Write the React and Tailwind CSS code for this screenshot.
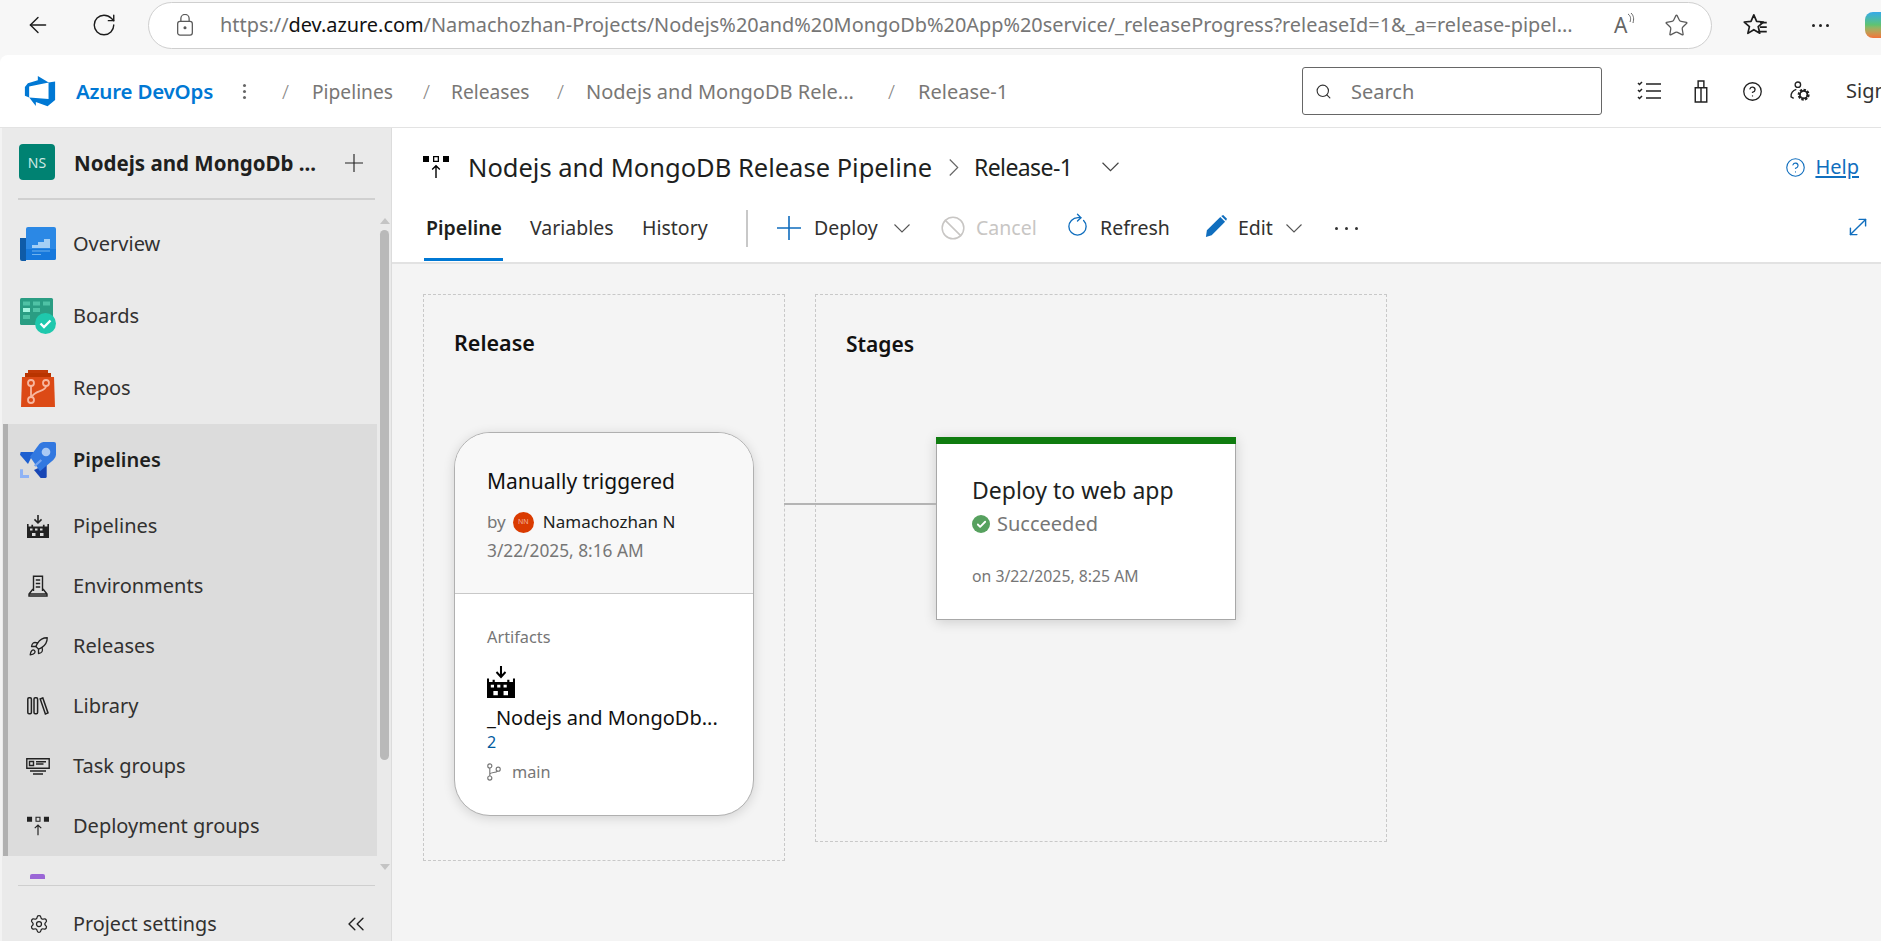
import React from 'react';
import { ArrowLeft, RotateCw, Star, Search, Ban, CircleHelp, MoveDiagonal, Settings, ChevronsLeft, Check, Rocket } from 'lucide-react';

const Factory = ({ className }) => (
  <svg viewBox="0 0 22 23" preserveAspectRatio="none" className={className} fill="currentColor">
    <path d="M10.2 0h1.6v6l2.2-2.2 1.1 1.1L11 9 6.9 4.9 8 3.8l2.2 2.2z" />
    <path fillRule="evenodd" d="M0 9h1.6v2.5h2.8V9.8h1.7v1.7h9.8V9.8h1.7v1.7h2.8V9H22v14H0zM3 13.5v2h2.5v-2zm5 0v2h2.5v-2zm5 0v2h2.5v-2zM5 18v3h3.5v-3zm8 0v3h3.500v-3z" />
  </svg>
);

const DeployGroups = ({ className }) => (
  <svg viewBox="0 0 26 22" className={className} fill="currentColor">
    <path d="M0 0h6v6H0zM20 0h6v6h-6z" />
    <path fillRule="evenodd" d="M10 0h6v6h-6zm1.3 1.3v3.4h3.4V1.3z" />
    <path d="M12.3 22V11.5L9.6 14l-.9-.9L13 8.8l4.3 4.3-.9.9-2.7-2.500V22z" />
  </svg>
);

const Environments = ({ className }) => (
  <svg viewBox="0 0 20 22" className={className} fill="none" stroke="currentColor" strokeWidth="1.4">
    <path d="M5.500 16V1.200h9V16M7.800 5h4.400M7.800 8.500h4.400M7.800 12h4.400" />
    <path d="M5 14 1 19v2h18v-2l-4-5M1 19h18" />
  </svg>
);

const Library = ({ className }) => (
  <svg viewBox="0 0 22 18" className={className} fill="none" stroke="currentColor" strokeWidth="1.5">
    <rect x="0.8" y="0.8" width="3.6" height="16" rx="1.2" />
    <rect x="7" y="0.8" width="3.6" height="16" rx="1.2" />
    <path d="M13.200 2 15.800.9l5.200 15-2.600 1z" />
  </svg>
);

const TaskGroups = ({ className }) => (
  <svg viewBox="0 0 24 17" className={className} fill="none" stroke="currentColor" strokeWidth="1.4">
    <path d="M.8.8h22.400v9.400H.8zM4 13h16M7 16h10" />
    <path d="M3.500 3.500h4v4h-4zM10 3.700h10M10 6h7.500" />
  </svg>
);

const PersonGear = ({ className }) => (
  <svg viewBox="0 0 20 20" className={className}>
    <circle cx="7.5" cy="3.5" r="2.6" fill="none" stroke="currentColor" strokeWidth="1.3" />
    <path d="M6 8C2.500 9 .8 11 1 15l2.500 1.500" fill="none" stroke="currentColor" strokeWidth="1.3" />
    <circle cx="13" cy="13" r="4.2" fill="none" stroke="currentColor" strokeWidth="3" strokeDasharray="2 1.2" />
    <circle cx="13" cy="13" r="3.6" fill="none" stroke="currentColor" strokeWidth="1.6" />
  </svg>
);

const Favorites = ({ className }) => (
  <svg viewBox="0 0 24 24" className={className} fill="none" stroke="currentColor" strokeWidth="1.5">
    <path d="M10.500 2.500 13 8.400l6 .5-4.600 4 1.400 6-5.300-3.200L5.200 19l1.400-6L2 8.900l6-.5z" strokeLinejoin="round" />
    <path d="M16 9.500h6M16 13.500h6M15 17.500h7" />
  </svg>
);

const BranchIcon = ({ className }) => (
  <svg viewBox="0 0 15 19" className={className} fill="none" stroke="currentColor" strokeWidth="1.2">
    <circle cx="3" cy="3" r="2.2" />
    <circle cx="3" cy="16" r="2.2" />
    <circle cx="12" cy="6.5" r="2.2" />
    <path d="M3 5.200v8.600M3 12c0-2.500 6.500-1.500 8.300-3.500" />
  </svg>
);

// thin chevron and plus, lucide's have too much padding for these spots
const Chevron = ({ className }) => (
  <svg viewBox="0 0 16 9" className={className} fill="none" stroke="currentColor" strokeWidth="1.1">
    <path d="M.5.5 8 8l7.500-7.500" />
  </svg>
);

const ChevronRight = () => (
  <svg viewBox="0 0 9 16" className="w-[10px] h-[17px] ml-[17px] text-[#666] shrink-0" fill="none" stroke="currentColor" strokeWidth="1.1">
    <path d="M.5.5 8 8 .5 15.500" />
  </svg>
);

const ThinPlus = ({ className, width = 1.6 }) => (
  <svg viewBox="0 0 24 24" className={className} fill="none" stroke="currentColor" strokeWidth={width}>
    <path d="M0 12h24M12 0v24" />
  </svg>
);

const OverviewIcon = () => (
  <svg viewBox="0 0 36 34" className="w-9 h-[34px]">
    <path d="M0 11h6v23H2a2 2 0 0 1-2-2z" fill="#0f5ba8" />
    <rect x="6" y="0" width="30" height="33" rx="2" fill="#2b88e5" />
    <path d="M6 22h30v9a2 2 0 0 1-2 2H6z" fill="#1678dc" />
    <path d="M12 18h6v-3h6v-3h6V7h0v14H12z" fill="#a4cff5" />
    <path d="M12 24h18M12 27.500h9" stroke="#6fb2ee" strokeWidth="1" />
  </svg>
);

const BoardsIcon = () => (
  <svg viewBox="0 0 36 36" className="w-9 h-9">
    <rect x="0" y="0" width="33" height="27" rx="1.5" fill="#2a9d83" />
    <path d="M3 3.500h7v4H3zM13 3.500h7v4h-7zM23 3.500h7v4h-7zM13 10h7v4h-7zM3 17h7v4H3z" fill="#4fc2a5" />
    <path d="M3 10h7v4H3z" fill="#a5f5e0" />
    <circle cx="25.500" cy="25.500" r="10.500" fill="#1fc8ad" />
    <path d="m20.500 25.500 3.500 3.500 6.500-6.500" fill="none" stroke="#fff" strokeWidth="2.400" />
  </svg>
);

const ReposIcon = () => (
  <svg viewBox="0 0 34 37" className="w-[34px] h-[37px]">
    <path d="M4 3h26v6H4z" fill="#b93400" />
    <path d="M7 0h20v3H7z" fill="#c23a08" />
    <path d="M1 7h32l1 30H0z" fill="#dc4a16" />
    <g fill="none" stroke="#f7b7a0" strokeWidth="1.800">
      <circle cx="10" cy="13" r="3" />
      <circle cx="25" cy="13" r="3" />
      <circle cx="10" cy="30" r="3" />
      <path d="M10 16v11M25 16c0 6-12 4-14 11" />
    </g>
  </svg>
);

const PipelinesIcon = () => (
  <svg viewBox="0 0 108 108" className="w-9 h-9">
    <path d="M2 30h40L24 66 0 38z" fill="#1d5fd0" />
    <path d="M80 66v38q0 4-4 4H62L42 84z" fill="#1746b5" />
    <path d="M30 44 58 6q4-4 12-6h32q6 0 6 6v32q0 8-8 16L60 88z" fill="#3278e0" />
    <path d="M44 72 64 54" stroke="#76a5ef" strokeWidth="7" />
    <circle cx="78" cy="30" r="13" fill="#a9c9f5" />
    <path d="M0 82h9v17h18v9H0z" fill="#8fb3f5" />
  </svg>
);

const navTop = [
  { label: 'Overview', icon: <OverviewIcon /> },
  { label: 'Boards', icon: <BoardsIcon /> },
  { label: 'Repos', icon: <ReposIcon /> },
];

const navSub = [
  { label: 'Pipelines', icon: <Factory className="w-[22px] h-[23px]" /> },
  { label: 'Environments', icon: <Environments className="w-5 h-[22px]" /> },
  { label: 'Releases', icon: <Rocket className="w-[21px] h-[21px]" strokeWidth={1.5} /> },
  { label: 'Library', icon: <Library className="w-[22px] h-[18px]" /> },
  { label: 'Task groups', icon: <TaskGroups className="w-6 h-[17px]" /> },
  { label: 'Deployment groups', icon: <DeployGroups className="w-[22px] h-[20px]" /> },
];

function BrowserBar() {
  return (
    <div className="h-[55px] shrink-0 bg-[#f7f7f7] flex items-center pb-[5px] text-[#1c1c1c]">
      <ArrowLeft className="w-[26px] h-[26px] ml-[25px] shrink-0" strokeWidth={1.3} />
      <RotateCw className="w-[26px] h-[26px] ml-[40px] shrink-0" strokeWidth={1.3} />
      <div className="ml-[31px] w-[1564px] h-[47px] rounded-full bg-white border border-[#cfcfcf] flex items-center shrink-0">
        <svg viewBox="0 0 18 24" className="w-[18px] h-[22px] ml-[27px] text-[#5a5a5a]" fill="none" stroke="currentColor" strokeWidth="1.4">
          <rect x="1" y="8" width="16" height="15" rx="2.500" />
          <path d="M4.500 8V5a4.500 4.500 0 0 1 9 0v3" />
          <circle cx="9" cy="15" r="1" fill="currentColor" />
        </svg>
        <span className="ml-[26px] text-[19.9px] text-[#767676] whitespace-nowrap w-[1360px] overflow-hidden">
          https://<span className="text-[#111]">dev.azure.com</span>/Namachozhan-Projects/Nodejs%20and%20MongoDb%20App%20service/_releaseProgress?releaseId=1&amp;_a=release-pipel...
        </span>
        <span className="ml-[34px] text-[21px] text-[#666] leading-none">A</span>
        <svg viewBox="0 0 8 12" className="w-[8px] h-[12px] text-[#666] -mt-3" fill="none" stroke="currentColor"><path d="M1 1c3 2 3 5 2 8M4 0c3 3 3 6 2 10" /></svg>
        <Star className="w-[25px] h-[25px] ml-[29px] text-[#5a5a5a]" strokeWidth={1.2} />
      </div>
      <Favorites className="w-[27px] h-[27px] ml-[30px] shrink-0" />
      <span className="ml-[43px] flex gap-[4px]">
        <i className="w-[3px] h-[3px] rounded-full bg-[#222]" />
        <i className="w-[3px] h-[3px] rounded-full bg-[#222]" />
        <i className="w-[3px] h-[3px] rounded-full bg-[#222]" />
      </span>
      <div className="ml-[36px] w-[20px] h-[26px] rounded-l-lg bg-gradient-to-b from-[#38a9e8] via-[#5fc36f] to-[#f2703a] shrink-0" />
    </div>
  );
}

function TopNav() {
  const crumb = 'text-[#797775] whitespace-nowrap shrink-0 mt-[2px]';
  const slash = 'text-[20px] text-[#8a8886] font-light w-[8px] shrink-0 mt-[2px]';
  return (
    <div className="h-[73px] shrink-0 bg-white border-b border-[#e3e3e3] flex items-center rounded-tl-lg overflow-hidden">
      <svg viewBox="0 0 18 18" className="w-[34px] h-[34px] ml-[23px] shrink-0" fill="#0078d4">
        <path d="M17 4v9.740l-4 3.280-6.200-2.260V17l-3.510-4.590 10.230.8V4.440zm-3.410.49L7.850 1v2.290L2.580 4.840 1 6.870v4.610l2.260 1V6.570z" />
      </svg>
      <span className="ml-[19px] w-[139px] shrink-0 text-[20.5px] font-semibold text-[#0078d4] whitespace-nowrap tracking-[-0.2px]">Azure DevOps</span>
      <span className="ml-[28px] flex flex-col gap-[3px] shrink-0">
        <i className="w-[3px] h-[3px] rounded-full bg-[#666]" />
        <i className="w-[3px] h-[3px] rounded-full bg-[#666]" />
        <i className="w-[3px] h-[3px] rounded-full bg-[#666]" />
      </span>
      <span className={`${slash} ml-[36px]`}>/</span>
      <span className={`${crumb} text-[19.2px] ml-[22px] w-[82px]`}>Pipelines</span>
      <span className={`${slash} ml-[29px]`}>/</span>
      <span className={`${crumb} text-[19.2px] ml-[20px] w-[77px]`}>Releases</span>
      <span className={`${slash} ml-[29px]`}>/</span>
      <span className={`${crumb} text-[20px] ml-[21px] w-[268px]`}>Nodejs and MongoDB Rele...</span>
      <span className={`${slash} ml-[34px]`}>/</span>
      <span className={`${crumb} text-[20px] ml-[22px] w-[88px]`}>Release-1</span>
      <div className="ml-[296px] w-[300px] h-[48px] rounded-[3px] border border-[#666] flex items-center shrink-0">
        <Search className="w-[17px] h-[17px] ml-[12px] text-[#333]" strokeWidth={1.6} />
        <span className="ml-[19px] text-[20px] text-[#767676] mt-[2px]">Search</span>
      </div>
      <svg viewBox="0 0 24 22" className="w-[24px] h-[22px] ml-[35px] shrink-0" fill="none" stroke="#222" strokeWidth="1.500">
        <path d="M9 4h15M9 11h15M9 18h15M1 3l1.500 1.500L5 2M1 10l1.500 1.500L5 9M1 17l1.500 1.500L5 16" />
      </svg>
      <svg viewBox="0 0 14 24" className="w-[14px] h-[23px] ml-[33px] shrink-0" fill="none" stroke="#222" strokeWidth="1.500">
        <path d="M1 8h12v15H1zM4 8V1h6v7M7 8v15" />
      </svg>
      <CircleHelp className="w-[21px] h-[21px] ml-[34px] shrink-0 text-[#222]" strokeWidth={1.5} />
      <PersonGear className="w-[21px] h-[21px] ml-[27px] shrink-0 text-[#222]" />
      <span className="ml-[35px] text-[20px] text-[#333] shrink-0">Sign</span>
    </div>
  );
}

function Sidebar() {
  return (
    <aside className="w-[392px] shrink-0 bg-[#eaeaea] border-r border-[#dcdcdc] flex flex-col relative border-l-2 border-l-[#f3f3f3]">
      <div className="h-[72px] shrink-0 flex items-center mx-[16px] border-b-2 border-[#d0d0d0]">
        <div className="w-9 h-9 ml-[1px] rounded-[4px] bg-[#008272] text-[#cfe9e4] text-[14px] flex items-center justify-center shrink-0 -mt-[2px]">NS</div>
        <span className="ml-[19px] text-[20.5px] font-bold text-[#201f1e] whitespace-nowrap w-[252px] shrink-0 overflow-hidden">Nodejs and MongoDb ...</span>
        <ThinPlus className="w-[18px] h-[18px] ml-[19px] text-[#222] shrink-0" width={1.5} />
      </div>
      <div className="h-[685px] overflow-hidden shrink-0 pt-[8px] pr-[14px]">
        {navTop.map((n) => (
          <div key={n.label} className="h-[72px] flex items-center pl-[18px]">
            <span className="w-9 flex justify-center">{n.icon}</span>
            <span className="ml-[17px] text-[20px] text-[#323130]">{n.label}</span>
          </div>
        ))}
        <div className="bg-[#dcdcdc] border-l-[5px] border-[#b0b0b0] ml-[1px]">
          <div className="h-[72px] flex items-center pl-[12px]">
            <PipelinesIcon />
            <span className="ml-[17px] text-[20px] font-semibold text-[#201f1e]">Pipelines</span>
          </div>
          {navSub.map((n) => (
            <div key={n.label} className="h-[60px] flex items-center pl-[12px]">
              <span className="w-9 flex justify-center text-[#222]">{n.icon}</span>
              <span className="ml-[17px] text-[20px] text-[#323130]">{n.label}</span>
            </div>
          ))}
        </div>
        <div className="h-[60px] pl-[28px] pt-[18px]">
          <div className="w-[15px] h-[5px] bg-[#9a66d6] rounded-t-[2px]" />
        </div>
      </div>
      <div className="flex-1 mx-[16px] border-t border-[#cfcfcf] flex items-center pt-[20px]">
        <Settings className="w-[20px] h-[20px] ml-[11px] text-[#222]" strokeWidth={1.5} />
        <span className="ml-[24px] text-[19.8px] text-[#323130]">Project settings</span>
        <ChevronsLeft className="w-[28px] h-[28px] ml-auto mr-[5px] text-[#222]" strokeWidth={1.2} />
      </div>
      {/* overlay scrollbar */}
      <div className="absolute left-[378px] top-[90px] w-0 h-0 border-x-[5px] border-x-transparent border-b-[6px] border-b-[#c4c4c4]" />
      <div className="absolute left-[378px] top-[102px] w-[9px] h-[530px] rounded-full bg-[#b9b9b9]" />
      <div className="absolute left-[378px] top-[736px] w-0 h-0 border-x-[5px] border-x-transparent border-t-[6px] border-t-[#c4c4c4]" />
    </aside>
  );
}

function Toolbar() {
  const text = 'text-[19.5px] text-[#323130] whitespace-nowrap shrink-0';
  const chevron = 'w-[16px] h-[9px] text-[#555] shrink-0';
  return (
    <div className="h-[136px] shrink-0 bg-white border-b-2 border-[#e2e2e2]">
      <div className="h-[77px] flex items-center pl-[31px] pt-[1px]">
        <DeployGroups className="w-[26px] h-[26px] text-black shrink-0" />
        <span className="ml-[19px] text-[25.5px] text-[#201f1e] whitespace-nowrap">Nodejs and MongoDB Release Pipeline</span>
        <ChevronRight />
        <span className="ml-[15px] text-[23px] text-[#201f1e] whitespace-nowrap tracking-[-0.6px]">Release-1</span>
        <Chevron className="w-[17px] h-[10px] ml-[30px] text-[#444]" />
        <CircleHelp className="w-[21px] h-[21px] ml-auto text-[#106ebe]" strokeWidth={1.3} />
        <span className="ml-[9px] mr-[22px] text-[20px] text-[#106ebe] underline underline-offset-2">Help</span>
      </div>
      <div className="h-[56px] flex items-center pl-[34px] pb-[10px]">
        <div className="relative flex items-center w-[76px] shrink-0">
          <span className="text-[19.5px] font-semibold text-[#201f1e]">Pipeline</span>
          <div className="absolute left-[-2px] right-[-1px] bottom-[-18px] h-[3px] bg-[#0078d4]" />
        </div>
        <span className={`${text} ml-[28px] w-[83px]`}>Variables</span>
        <span className={`${text} ml-[29px] w-[66px]`}>History</span>
        <div className="ml-[38px] w-[2px] h-[37px] bg-[#c8c8c8] shrink-0" />
        <ThinPlus className="w-[24px] h-[24px] ml-[29px] text-[#0f6cbd] shrink-0" />
        <span className={`${text} ml-[13px] w-[66px]`}>Deploy</span>
        <Chevron className={`${chevron} ml-[14px]`} />
        <Ban className="w-[26px] h-[26px] ml-[30px] text-[#c8c6c4] shrink-0" strokeWidth={1.4} />
        <span className="ml-[10px] w-[61px] text-[19.5px] text-[#c8c6c4] shrink-0">Cancel</span>
        <RotateCw className="w-[23px] h-[23px] ml-[29px] text-[#106ebe] shrink-0 -rotate-45 -mt-[3px]" strokeWidth={1.4} />
        <span className={`${text} ml-[11px] w-[68px]`}>Refresh</span>
        <svg viewBox="0 0 24 24" className="w-[23px] h-[23px] ml-[36px] shrink-0 -mt-[3px]" fill="#106ebe">
          <path d="M17 2l5 5L8 21l-6 2 1-7zM18 1l2-1 4 4-1 2z" />
        </svg>
        <span className={`${text} ml-[11px] w-[36px]`}>Edit</span>
        <Chevron className={`${chevron} ml-[12px]`} />
        <span className="ml-[33px] flex gap-[7px]">
          <i className="w-[3px] h-[3px] rounded-full bg-[#333]" />
          <i className="w-[3px] h-[3px] rounded-full bg-[#333]" />
          <i className="w-[3px] h-[3px] rounded-full bg-[#333]" />
        </span>
        <MoveDiagonal className="w-[26px] h-[26px] ml-auto mr-[10px] text-[#106ebe] -mt-[2px]" strokeWidth={1.3} />
      </div>
    </div>
  );
}

function ReleaseBox() {
  return (
    <div className="w-[362px] h-[567px] border border-dashed border-[#c8c8c8] pl-[30px] pt-[33px] shrink-0">
      <h2 className="text-[21.5px] font-semibold text-[#111] leading-[30px]">Release</h2>
      <div className="mt-[74px] w-[300px] h-[384px] rounded-[36px] border border-[#b0b0b0] bg-white shadow-[0_2px_12px_rgba(0,0,0,0.14)] overflow-hidden">
        <div className="h-[161px] bg-[#f8f8f8] border-b border-[#c8c8c8] pl-[32px] pt-[32px]">
          <div className="text-[21px] leading-[32px] text-[#111]">Manually triggered</div>
          <div className="mt-[13px] h-[24px] flex items-center text-[17px]">
            <span className="text-[#767676]">by</span>
            <span className="ml-[7px] w-[21px] h-[21px] rounded-full bg-[#da3b01] text-[#f3b7a0] text-[7px] flex items-center justify-center">NN</span>
            <span className="ml-[9px] text-[#201f1e]">Namachozhan N</span>
          </div>
          <div className="mt-[5px] text-[17.3px] text-[#767676] leading-[24px]">3/22/2025, 8:16 AM</div>
        </div>
        <div className="pl-[32px] pt-[31px]">
          <div className="text-[16.3px] leading-[24px] text-[#767676]">Artifacts</div>
          <Factory className="mt-[17px] w-[28px] h-[32px] text-black" />
          <div className="mt-[6px] text-[20px] leading-[28px] text-[#111] whitespace-nowrap">_Nodejs and MongoDb...</div>
          <div className="text-[16px] leading-[20px] text-[#005a9e]">2</div>
          <div className="mt-[8px] flex items-center text-[16.3px] text-[#767676]">
            <BranchIcon className="w-[14px] h-[18px]" />
            <span className="ml-[11px] leading-[24px]">main</span>
          </div>
        </div>
      </div>
    </div>
  );
}

function StagesBox() {
  return (
    <div className="relative w-[572px] h-[548px] border border-dashed border-[#c8c8c8] pl-[30px] pt-[34px] shrink-0">
      <h2 className="text-[21px] font-semibold text-[#111] leading-[30px]">Stages</h2>
      {/* connector between the release card and the stage node */}
      <div className="absolute left-[-32px] top-[208px] w-[152px] h-[2px] bg-[#b4b4b4]" />
      <div className="mt-[78px] ml-[90px] w-[300px] h-[183px] bg-white border border-[#a8a8a8] border-t-0 shadow-[0_2px_12px_rgba(0,0,0,0.16)]">
        <div className="h-[7px] bg-[#107c10] -mx-px" />
        <div className="pl-[35px] pt-[30px]">
          <div className="text-[23px] leading-[32px] text-[#201f1e]">Deploy to web app</div>
          <div className="flex items-center mt-[4px]">
            <span className="w-[18px] h-[18px] rounded-full bg-[#57a15f] flex items-center justify-center">
              <Check className="w-[11px] h-[11px] text-white" strokeWidth={4} />
            </span>
            <span className="ml-[7px] text-[20px] leading-[28px] text-[#767676]">Succeeded</span>
          </div>
          <div className="mt-[26px] text-[15.8px] text-[#767676] leading-[24px]">on 3/22/2025, 8:25 AM</div>
        </div>
      </div>
    </div>
  );
}

export default function App() {
  return (
    <div className="w-[1881px] h-[941px] overflow-hidden flex flex-col bg-[#f7f7f7] font-['Noto_Sans',sans-serif]">
      <BrowserBar />
      <TopNav />
      <div className="flex-1 flex min-h-0">
        <Sidebar />
        <main className="flex-1 flex flex-col min-w-0 bg-[#f4f4f4]">
          <Toolbar />
          <div className="flex-1 flex items-start gap-[30px] pl-[31px] pt-[30px]">
            <ReleaseBox />
            <StagesBox />
          </div>
        </main>
      </div>
    </div>
  );
}
